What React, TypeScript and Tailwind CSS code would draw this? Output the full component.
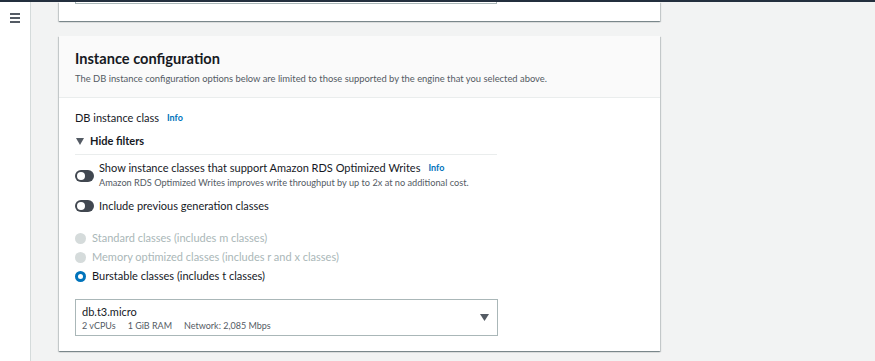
import React from "react";

function Toggle() {
  return (
    <span className="relative inline-flex h-[12px] w-[19px] shrink-0 items-center rounded-full bg-[#414750]">
      <span className="ml-[2px] h-[8px] w-[8px] rounded-full bg-white" />
    </span>
  );
}

function Radio({ state }: { state: "disabled" | "checked" }) {
  if (state === "checked") {
    return (
      <span className="flex h-[11px] w-[11px] shrink-0 items-center justify-center rounded-full bg-[#0073bb]">
        <span className="h-[5px] w-[5px] rounded-full bg-white" />
      </span>
    );
  }
  return <span className="h-[11px] w-[11px] shrink-0 rounded-full bg-[#d5dbdb]" />;
}

export default function App() {
  const cardShadow =
    "shadow-[0_1px_1px_0_rgba(0,28,36,0.3),1px_1px_1px_0_rgba(0,28,36,0.15),-1px_1px_1px_0_rgba(0,28,36,0.15)]";
  return (
    <div
      className="flex h-[361px] w-[875px] flex-col overflow-hidden bg-[#f2f3f3] text-[#16191f]"
      style={{ fontFamily: 'Lato, "Open Sans", sans-serif' }}
    >
      <div className="h-[2px] w-full shrink-0 bg-[#232f3e]" />
      <div className="flex min-h-0 flex-1">
        {/* sidebar */}
        <div className="w-[31px] shrink-0 border-r border-[#d5dbdb] bg-white">
          <div className="ml-[10px] mt-[11px] flex w-[10px] flex-col gap-[2.5px]">
            <span className="h-[1.5px] w-full bg-[#545b64]" />
            <span className="h-[1.5px] w-full bg-[#545b64]" />
            <span className="h-[1.5px] w-full bg-[#545b64]" />
          </div>
        </div>
        {/* main */}
        <div className="flex flex-col pl-[28px]">
          {/* card 1 tail */}
          <div className={`h-[19px] w-[601px] bg-white ${cardShadow}`}>
            <div className="ml-[16px] h-[2px] w-[422px] border-x border-b border-[#aab7b8]" />
          </div>
          {/* card 2 */}
          <div className={`mt-[15px] w-[601px] bg-white ${cardShadow}`}>
            <div className="h-[62px] border-b border-[#eaeded] bg-[#fafafa] px-[16px] pt-[12px]">
              <div className="text-[14.6px] font-bold leading-[22px]">Instance configuration</div>
              <div className="mt-[2px] text-[9.4px] leading-[14px] text-[#545b64]">
                The DB instance configuration options below are limited to those supported by the engine that you selected above.
              </div>
            </div>
            <div className="px-[16px] pb-[15px] pt-[12px]">
              <div className="flex items-center gap-[8px] text-[11px] leading-[16px]">
                <span>DB instance class</span>
                <span className="text-[9px] font-bold text-[#0073bb]">Info</span>
              </div>
              <div className="mt-[7px] flex w-[422px] items-center gap-[6px] border-b border-[#eaeded] pb-[5px] text-[11px] leading-[16px]">
                <svg width="8" height="7" viewBox="0 0 8 7" className="ml-[1px]">
                  <path d="M0 0 L8 0 L4 7 Z" fill="#545b64" />
                </svg>
                <span className="font-bold text-[#16191f]">Hide filters</span>
              </div>
              <div className="mt-[5px] flex items-start gap-[5px]">
                <div className="mt-[2px]">
                  <Toggle />
                </div>
                <div>
                  <div className="flex items-center gap-[8px] text-[11px] leading-[16px]">
                    <span>Show instance classes that support Amazon RDS Optimized Writes</span>
                    <span className="text-[9px] font-bold text-[#0073bb]">Info</span>
                  </div>
                  <div className="text-[9.2px] leading-[14px] text-[#545b64]">
                    Amazon RDS Optimized Writes improves write throughput by up to 2x at no additional cost.
                  </div>
                </div>
              </div>
              <div className="mt-[8px] flex items-center gap-[5px] text-[11px] leading-[16px]">
                <Toggle />
                <span>Include previous generation classes</span>
              </div>
              <div className="mt-[16px] flex flex-col gap-[3px] text-[11px] leading-[16px]">
                <div className="flex items-center gap-[6px] text-[#aab7b8]">
                  <Radio state="disabled" />
                  <span>Standard classes (includes m classes)</span>
                </div>
                <div className="flex items-center gap-[6px] text-[#aab7b8]">
                  <Radio state="disabled" />
                  <span>Memory optimized classes (includes r and x classes)</span>
                </div>
                <div className="flex items-center gap-[6px]">
                  <Radio state="checked" />
                  <span>Burstable classes (includes t classes)</span>
                </div>
              </div>
              <div className="mt-[15px] flex h-[37px] w-[423px] items-center justify-between border border-[#aab7b8] px-[6px]">
                <div className="flex flex-col">
                  <span className="text-[11px] leading-[15px]">db.t3.micro</span>
                  <span className="flex gap-[12px] text-[9px] leading-[13px] text-[#545b64]">
                    <span>2 vCPUs</span>
                    <span>1 GiB RAM</span>
                    <span>Network: 2,085 Mbps</span>
                  </span>
                </div>
                <svg width="9" height="7" viewBox="0 0 9 7" className="mr-[2px]">
                  <path d="M0 0 L9 0 L4.5 7 Z" fill="#545b64" />
                </svg>
              </div>
            </div>
          </div>
        </div>
      </div>
    </div>
  );
}
